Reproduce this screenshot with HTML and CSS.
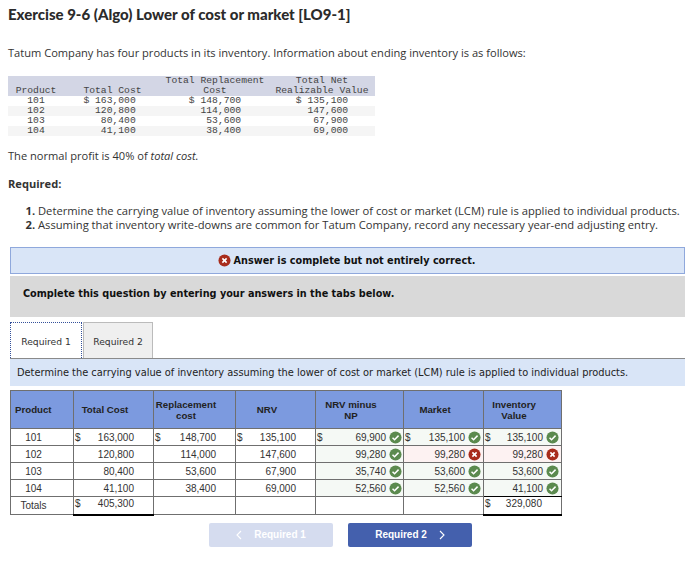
FILE: index.html
```html
<!DOCTYPE html>
<html lang="en">
<head>
<meta charset="utf-8">
<title>Exercise 9-6</title>
<link rel="stylesheet" href="styles.css">
</head>
<body>
<svg class="defs" width="0" height="0" aria-hidden="true">
  <symbol id="ok" viewBox="0 0 14 14"><circle cx="7" cy="7" r="6.5" fill="#5b8a4e"/><path d="M3.8 7.2 6 9.4 10.3 5" fill="none" stroke="#fff" stroke-width="1.6"/></symbol>
  <symbol id="no" viewBox="0 0 14 14"><circle cx="7" cy="7" r="6.5" fill="#a82c1c"/><path d="M4.7 4.7 9.3 9.3M9.3 4.7 4.7 9.3" fill="none" stroke="#fff" stroke-width="1.7"/></symbol>
</svg>
<main class="page">
  <h1 class="title">Exercise 9-6 (Algo) Lower of cost or market [LO9-1]</h1>
  <p class="intro">Tatum Company has four products in its inventory. Information about ending inventory is as follows:</p>
  <table class="data">
    <colgroup><col class="d1"><col class="d2"><col class="d3"><col class="d4"></colgroup>
    <thead><tr><th>Product</th><th>Total Cost</th><th>Total Replacement<br>Cost</th><th>Total Net<br>Realizable Value</th></tr></thead>
    <tbody>
      <tr><td>101</td><td>$ 163,000 </td><td>$ 148,700</td><td>$ 135,100</td></tr>
      <tr><td>102</td><td>  120,800 </td><td>  114,000</td><td>  147,600</td></tr>
      <tr><td>103</td><td>   80,400 </td><td>   53,600</td><td>   67,900</td></tr>
      <tr><td>104</td><td>   41,100 </td><td>   38,400</td><td>   69,000</td></tr>
    </tbody>
  </table>
  <p class="profit">The normal profit is 40% of <em>total cost.</em></p>
  <p class="req"><strong>Required:</strong></p>
  <ol class="steps">
    <li>Determine the carrying value of inventory assuming the lower of cost or market (LCM) rule is applied to individual products.</li>
    <li>Assuming that inventory write-downs are common for Tatum Company, record any necessary year-end adjusting entry.</li>
  </ol>
  <div class="alert"><svg class="ic"><use href="#no"/></svg><span>Answer is complete but not entirely correct.</span></div>
  <div class="prompt">Complete this question by entering your answers in the tabs below.</div>
  <div class="tabs">
    <div class="tab active">Required 1</div>
    <div class="tab">Required 2</div>
  </div>
  <div class="desc">Determine the carrying value of inventory assuming the lower of cost or market (LCM) rule is applied to individual products.</div>
  <table class="sheet">
    <colgroup><col class="c1"><col class="c2"><col class="c3"><col class="c4"><col class="c5"><col class="c6"><col class="c7"></colgroup>
    <thead>
      <tr><th class="left">Product</th><th>Total Cost</th><th>Replacement<br>cost</th><th>NRV</th><th>NRV minus<br>NP</th><th>Market</th><th>Inventory<br>Value</th></tr>
    </thead>
    <tbody>
      <tr><td class="id">101</td><td class="num"><span class="cur">$</span>163,000</td><td class="num"><span class="cur">$</span>148,700</td><td class="num"><span class="cur">$</span>135,100</td>
        <td class="ans good"><span class="cur">$</span>69,900<svg class="ic"><use href="#ok"/></svg></td><td class="ans wide good"><span class="cur">$</span>135,100<svg class="ic"><use href="#ok"/></svg></td><td class="ans wide good"><span class="cur">$</span>135,100<svg class="ic"><use href="#ok"/></svg></td></tr>
      <tr><td class="id">102</td><td class="num">120,800</td><td class="num">114,000</td><td class="num">147,600</td>
        <td class="ans good">99,280<svg class="ic"><use href="#ok"/></svg></td><td class="ans wide bad">99,280<svg class="ic"><use href="#no"/></svg></td><td class="ans wide bad">99,280<svg class="ic"><use href="#no"/></svg></td></tr>
      <tr><td class="id">103</td><td class="num">80,400</td><td class="num">53,600</td><td class="num">67,900</td>
        <td class="ans good">35,740<svg class="ic"><use href="#ok"/></svg></td><td class="ans wide good">53,600<svg class="ic"><use href="#ok"/></svg></td><td class="ans wide good">53,600<svg class="ic"><use href="#ok"/></svg></td></tr>
      <tr><td class="id">104</td><td class="num">41,100</td><td class="num">38,400</td><td class="num">69,000</td>
        <td class="ans good">52,560<svg class="ic"><use href="#ok"/></svg></td><td class="ans wide good">52,560<svg class="ic"><use href="#ok"/></svg></td><td class="ans wide good above">41,100<svg class="ic"><use href="#ok"/></svg></td></tr>
      <tr class="totals"><td class="id">Totals</td><td class="num sum"><span class="cur">$</span>405,300</td><td></td><td></td><td></td><td></td><td class="num sum"><span class="cur">$</span>329,080</td></tr>
    </tbody>
  </table>
  <div class="nav">
    <div class="btn off"><svg class="chev prev" viewBox="0 0 6 10"><path d="M5 1 1 5l4 4" fill="none" stroke="#fff" stroke-width="1.1"/></svg>Required 1</div>
    <div class="btn on">Required 2<svg class="chev next" viewBox="0 0 6 10"><path d="M1 1l4 4-4 4" fill="none" stroke="#fff" stroke-width="1.1"/></svg></div>
  </div>
</main>
</body>
</html>
```
FILE: styles.css
```css
* { box-sizing: border-box; }
html, body { margin: 0; padding: 0; background: #fff; }
body { font-family: "Open Sans", "Liberation Sans", sans-serif; color: #333; overflow: hidden; }
.defs { position: absolute; }
.page { width: 699px; height: 568px; padding: 5px 14px 0 8px; }
.title { margin: 0; font-family: Lato, "Open Sans", sans-serif; font-size: 15px; line-height: 18px; font-weight: 900; color: #2b2b2b; }
.intro { margin: 22px 0 0; font-size: 11.1px; line-height: 16px; white-space: nowrap; }
.data { margin-top: 15px; width: 367px; border-collapse: collapse; table-layout: fixed; font-family: "Liberation Mono", monospace; font-size: 9.7px; line-height: 10px; color: #444; }
.d1 { width: 56px; } .d2 { width: 97px; } .d3 { width: 108px; } .d4 { width: 106px; }
.data th { padding: 0; font-weight: 400; background: #d3d6e5; vertical-align: bottom; text-align: center; white-space: nowrap; }
.data td { padding: 0; text-align: center; white-space: pre; height: 10px; }
.data tbody tr:nth-child(even) td { background: #f5f5f5; }
.profit { margin: 12px 0 0; font-size: 11.1px; line-height: 16px; }
.req { margin: 12px 0 0; font-size: 11.1px; line-height: 16px; }
.steps { margin: 12px 0 0; padding: 0 0 0 30px; font-size: 11.2px; line-height: 14px; white-space: nowrap; }
.steps li::marker { font-weight: 700; }
.alert { margin: 15px 0 0 2px; height: 27px; display: flex; align-items: center; justify-content: center; gap: 3px; padding-right: 2px; background: #d9e5f7; border: 1px solid #8fa8dc; font-family: "DejaVu Sans", sans-serif; font-size: 9.7px; font-weight: 700; color: #111; }
.alert .ic { width: 13px; height: 13px; margin: 0; }
.prompt { margin: 2px 0 0 2px; height: 41px; padding: 11px 0 0 13px; background: #d9d9d9; font-family: "DejaVu Sans", sans-serif; font-size: 9.7px; line-height: 13px; font-weight: 700; color: #111; }
.tabs { display: flex; gap: 1px; margin: 5px 0 0 2px; height: 37px; border-bottom: 1px solid #8a8a8a; }
.tab { width: 70px; height: 36px; display: flex; align-items: center; justify-content: center; padding-top: 2px; background: #efefef; border: 1px solid #bbb; border-bottom: 0; font-family: "DejaVu Sans", sans-serif; font-size: 9.2px; color: #333; }
.tab.active { width: 72px; background: #fff; border: 1px dotted #33509a; border-bottom: 0; }
.desc { margin-left: 2px; height: 27px; padding: 0 0 0 7px; display: flex; align-items: center; background: #d9e5f7; font-family: "DejaVu Sans", sans-serif; font-size: 9.83px; color: #222; white-space: nowrap; }
.sheet { margin: 4px 0 0 2px; width: 551px; border-collapse: collapse; table-layout: fixed; font-family: "Liberation Sans", sans-serif; font-size: 10px; color: #333; }
.c1 { width: 63px; } .c2 { width: 80px; } .c3 { width: 82px; } .c4 { width: 80px; } .c5 { width: 88px; } .c6 { width: 80px; } .c7 { width: 78px; }
.sheet th, .sheet td { border: 1px solid #6f6f6f; padding: 0; }
.sheet th { height: 38px; padding-right: 17px; background: #7c9adf; color: #222; font-size: 9.7px; font-weight: 700; line-height: 11px; text-align: center; }
.sheet th.left { text-align: left; padding: 0 0 0 4px; }
.sheet td { height: 17px; line-height: 15px; white-space: nowrap; }
.sheet tr.totals td { height: 18px; }
.sheet td.id { text-align: center; padding-right: 17px; }
.sheet td.num { text-align: right; padding-right: 19px; }
.sheet td.ans { text-align: right; padding-right: 1px; }
.sheet td.wide { padding-right: 2px; }
.good { background: #f5f9f5; }
.bad { background: #fdf2f2; }
.cur { float: left; padding-left: 1px; }
.sheet td.sum { border-top: 1px solid #000; border-bottom: 2px solid #000; line-height: 13px; vertical-align: top; }
.sheet td.above { border-bottom-color: #000; }
.sheet .ic { width: 13px; height: 13px; margin-left: 3px; vertical-align: -3px; }
.nav { display: flex; gap: 15px; margin: 7px 0 0 201px; }
.btn { width: 124px; height: 24px; border-radius: 2px; display: flex; align-items: center; justify-content: center; font-family: "Liberation Sans", sans-serif; font-size: 10px; font-weight: 700; color: #fff; }
.btn.off { background: #d5dcef; }
.btn.on { background: #4460ad; }
.chev { width: 6px; height: 10px; }
.chev.prev { margin-right: 12px; }
.chev.next { margin-left: 12px; }
```
